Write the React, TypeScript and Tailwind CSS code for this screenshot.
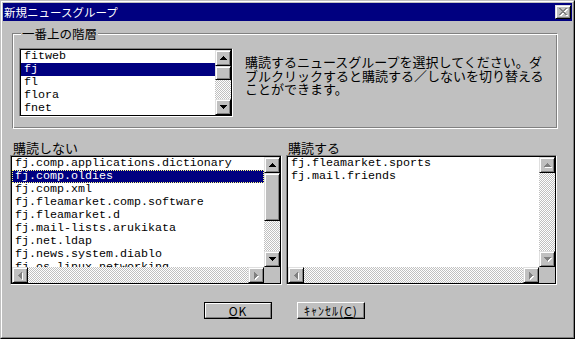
import React from 'react';

type Dir = 'up' | 'down' | 'left' | 'right';

function Arrow({ dir, disabled }: { dir: Dir; disabled?: boolean }) {
  const vertical = dir === 'up' || dir === 'down';
  const w = vertical ? 7 : 4;
  const h = vertical ? 4 : 7;
  const rects: number[][] = [];
  for (let i = 0; i < 4; i++) {
    const len = 2 * i + 1;
    const off = 3 - i;
    if (dir === 'up') rects.push([off, i, len, 1]);
    if (dir === 'down') rects.push([off, 3 - i, len, 1]);
    if (dir === 'left') rects.push([i, off, 1, len]);
    if (dir === 'right') rects.push([3 - i, off, 1, len]);
  }
  return (
    <svg width={w + 1} height={h + 1} shapeRendering="crispEdges" className="block">
      {disabled &&
        rects.map(([x, y, rw, rh], k) => (
          <rect key={'s' + k} x={x + 1} y={y + 1} width={rw} height={rh} fill="#ffffff" />
        ))}
      {rects.map(([x, y, rw, rh], k) => (
        <rect key={k} x={x} y={y} width={rw} height={rh} fill={disabled ? '#808080' : '#000000'} />
      ))}
    </svg>
  );
}

const raised =
  'bg-[#c0c0c0] border border-t-[#dfdfdf] border-l-[#dfdfdf] border-r-black border-b-black shadow-[inset_1px_1px_#ffffff,inset_-1px_-1px_#808080]';

const dither =
  'bg-[repeating-conic-gradient(#c0c0c0_0_25%,#ffffff_0_50%)] bg-[length:2px_2px]';

function ScrollBtn({ dir, disabled }: { dir: Dir; disabled?: boolean }) {
  return (
    <div className={`w-[16px] h-[16px] shrink-0 flex items-center justify-center pl-[1px] pt-[1px] ${raised}`}>
      <Arrow dir={dir} disabled={disabled} />
    </div>
  );
}

function VScroll({ thumb, disabled }: { thumb?: number; disabled?: boolean }) {
  return (
    <div className="w-[16px] shrink-0 flex flex-col">
      <ScrollBtn dir="up" disabled={disabled} />
      {thumb ? <div className={`w-[16px] shrink-0 ${raised}`} style={{ height: thumb }} /> : null}
      <div className={`flex-1 ${dither}`} />
      <ScrollBtn dir="down" disabled={disabled} />
    </div>
  );
}

function HScroll() {
  return (
    <div className="h-[16px] flex-1 flex">
      <ScrollBtn dir="left" disabled />
      <div className={`flex-1 ${dither}`} />
      <ScrollBtn dir="right" disabled />
    </div>
  );
}

const mono = "font-['Liberation_Mono',monospace] text-[11.67px] leading-[13px]";

function Row({ text, selected, focus }: { text: string; selected?: boolean; focus?: boolean }) {
  return (
    <div
      className={`h-[13px] pl-[3px] whitespace-nowrap ${mono} ${
        selected ? 'bg-[#000080] text-white' : 'text-black'
      } ${focus ? 'outline-1 outline-dotted outline-[#ffff80] -outline-offset-1' : ''}`}
    >
      {text}
    </div>
  );
}

function Sunken({ className, children }: { className?: string; children: React.ReactNode }) {
  return (
    <div className={`border border-t-[#808080] border-l-[#808080] border-r-white border-b-white ${className ?? ''}`}>
      <div className="w-full h-full border border-black flex flex-col bg-white">{children}</div>
    </div>
  );
}

function CloseX() {
  const pts: number[][] = [];
  for (let i = 0; i < 7; i++) {
    pts.push([i, i]);
    pts.push([6 - i, i]);
  }
  return (
    <svg width={10} height={9} shapeRendering="crispEdges" className="block">
      {pts.map(([x, y], k) => (
        <rect key={'s' + k} x={x + 1} y={y + 1} width={2} height={1} fill="#ffffff" />
      ))}
      {pts.map(([x, y], k) => (
        <rect key={k} x={x} y={y} width={2} height={1} fill="#808080" />
      ))}
    </svg>
  );
}

export default function App() {
  const jp = "font-['Noto_Sans_CJK_JP',sans-serif]";
  const leftItems = [
    'fj.comp.applications.dictionary',
    'fj.comp.oldies',
    'fj.comp.xml',
    'fj.fleamarket.comp.software',
    'fj.fleamarket.d',
    'fj.mail-lists.arukikata',
    'fj.net.ldap',
    'fj.news.system.diablo',
    'fj.os.linux.networking',
  ];
  return (
    <div className={`w-[575px] h-[339px] bg-[#c0c0c0] border border-t-[#c0c0c0] border-l-[#c0c0c0] border-r-black border-b-black ${jp}`}>
      <div className="w-full h-full border border-t-white border-l-white border-r-[#808080] border-b-[#808080] p-[1px] flex flex-col">
        {/* Title bar */}
        <div className="h-[18px] shrink-0 bg-[#000080] flex items-center justify-between">
          <span className="pl-[1px] text-white text-[11.5px] leading-[18px] whitespace-nowrap">新規ニュースグループ</span>
          <div className={`w-[16px] h-[14px] mr-[1px] flex items-center justify-center pl-[1px] ${raised}`}>
            <CloseX />
          </div>
        </div>

        {/* Group box */}
        <div className="relative ml-[9px] mt-[12px] w-[546px] h-[96px] shrink-0 border border-t-[#808080] border-l-[#808080] border-r-white border-b-white shadow-[inset_1px_1px_#ffffff,inset_-1px_-1px_#808080] flex items-start pt-[14px] pl-[6px]">
          <span className="absolute left-[8px] top-[-7px] px-[1px] bg-[#c0c0c0] text-black text-[12.5px] leading-[13px] whitespace-nowrap">
            一番上の階層
          </span>
          <Sunken className="w-[214px] h-[69px] shrink-0">
            <div className="flex flex-1 min-h-0">
              <div className="flex-1 overflow-hidden">
                <Row text="fitweb" />
                <Row text="fj" selected />
                <Row text="fl" />
                <Row text="flora" />
                <Row text="fnet" />
              </div>
              <VScroll thumb={14} />
            </div>
          </Sunken>
          <div className="ml-[12px] mt-[7px] text-[13px] leading-[13.5px] text-black whitespace-nowrap flex flex-col">
            <span className="block h-[13.5px]">購読するニュースグループを選択してください。ダ</span>
            <span className="block h-[13.5px]">ブルクリックすると購読する／しないを切り替える</span>
            <span className="block h-[13.5px]">ことができます。</span>
          </div>
        </div>

        {/* Lists */}
        <div className="flex mt-[12px] shrink-0">
          <div className="ml-[7px] w-[272px] flex flex-col">
            <div className="h-[14px] pl-[3px] text-[13px] leading-[14px] text-black whitespace-nowrap">購読しない</div>
            <Sunken className="h-[130px] w-full">
              <div className="flex h-[110px] shrink-0">
                <div className="flex-1 overflow-hidden">
                  {leftItems.map((t, i) => (
                    <Row key={t} text={t} selected={i === 1} focus={i === 1} />
                  ))}
                </div>
                <VScroll thumb={48} />
              </div>
              <div className="flex h-[16px] shrink-0">
                <HScroll />
                <div className="w-[16px] bg-[#c0c0c0]" />
              </div>
            </Sunken>
          </div>
          <div className="ml-[4px] w-[271px] flex flex-col">
            <div className="h-[14px] pl-[2px] text-[13px] leading-[14px] text-black whitespace-nowrap">購読する</div>
            <Sunken className="h-[130px] w-full">
              <div className="flex h-[110px] shrink-0">
                <div className="flex-1 overflow-hidden">
                  <Row text="fj.fleamarket.sports" />
                  <Row text="fj.mail.friends" />
                </div>
                <VScroll disabled />
              </div>
              <div className="flex h-[16px] shrink-0">
                <HScroll />
                <div className="w-[16px] bg-[#c0c0c0]" />
              </div>
            </Sunken>
          </div>
        </div>

        {/* Buttons */}
        <div className="flex mt-[17px] shrink-0">
          <div className="ml-[201px] w-[68px] h-[17px] border border-black">
            <div className="w-full h-full border border-t-white border-l-white border-r-[#808080] border-b-[#808080] bg-[#c0c0c0] flex items-center justify-center text-[12px] leading-[13px] tracking-[1px] text-black">
              <span className="underline">O</span>K
            </div>
          </div>
          <div className="ml-[25px] w-[68px] h-[17px] border border-t-white border-l-white border-r-black border-b-black shadow-[inset_-1px_-1px_#808080] bg-[#c0c0c0] flex items-center justify-center text-[12px] leading-[13px] tracking-[1px] text-black whitespace-nowrap">
            ｷｬﾝｾﾙ(<span className="underline">C</span>)
          </div>
        </div>
      </div>
    </div>
  );
}
